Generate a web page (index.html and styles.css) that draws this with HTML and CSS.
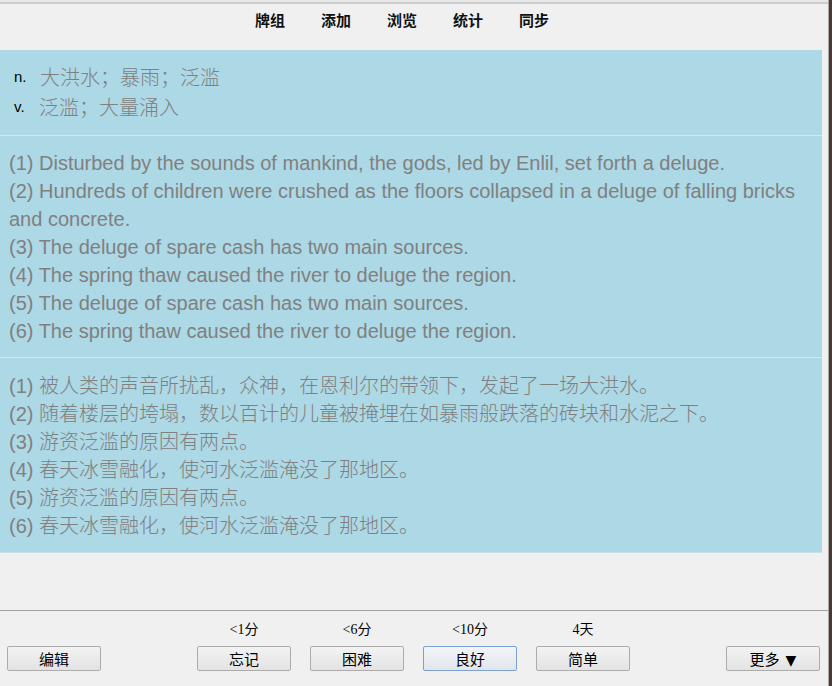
FILE: index.html
```html
<!DOCTYPE html>
<html lang="zh">
<head>
<meta charset="utf-8">
<title>deluge</title>
<link rel="stylesheet" href="styles.css">
</head>
<body>
<div class="window">
  <div class="main">
    <div class="topline"></div>
    <nav class="nav">
      <span>牌组</span>
      <span>添加</span>
      <span>浏览</span>
      <span>统计</span>
      <span>同步</span>
    </nav>
    <div class="card">
      <section class="defs">
        <div class="def"><span class="pos">n.</span><span class="zh">大洪水；暴雨；泛滥</span></div>
        <div class="def"><span class="pos">v.</span><span class="zh">泛滥；大量涌入</span></div>
      </section>
      <section class="sents">
        <div>(1) Disturbed by the sounds of mankind, the gods, led by Enlil, set forth a deluge.</div>
        <div>(2) Hundreds of children were crushed as the floors collapsed in a deluge of falling bricks and concrete.</div>
        <div>(3) The deluge of spare cash has two main sources.</div>
        <div>(4) The spring thaw caused the river to deluge the region.</div>
        <div>(5) The deluge of spare cash has two main sources.</div>
        <div>(6) The spring thaw caused the river to deluge the region.</div>
      </section>
      <section class="sents last">
        <div>(1) <span class="zh">被人类的声音所扰乱，众神，在恩利尔的带领下，发起了一场大洪水。</span></div>
        <div>(2) <span class="zh">随着楼层的垮塌，数以百计的儿童被掩埋在如暴雨般跌落的砖块和水泥之下。</span></div>
        <div>(3) <span class="zh">游资泛滥的原因有两点。</span></div>
        <div>(4) <span class="zh">春天冰雪融化，使河水泛滥淹没了那地区。</span></div>
        <div>(5) <span class="zh">游资泛滥的原因有两点。</span></div>
        <div>(6) <span class="zh">春天冰雪融化，使河水泛滥淹没了那地区。</span></div>
      </section>
    </div>
    <div class="spacer"></div>
    <footer class="bar">
      <div class="side"><button class="btn">编辑</button></div>
      <div class="answers">
        <div class="ans"><span class="due">&lt;1分</span><button class="btn">忘记</button></div>
        <div class="ans"><span class="due">&lt;6分</span><button class="btn">困难</button></div>
        <div class="ans"><span class="due">&lt;10分</span><button class="btn focus">良好</button></div>
        <div class="ans"><span class="due">4天</span><button class="btn">简单</button></div>
      </div>
      <div class="side right"><button class="btn">更多<span class="caret">▼</span></button></div>
    </footer>
  </div>
  <div class="edge"></div>
</div>
</body>
</html>
```

FILE: styles.css
```css
* { box-sizing: border-box; }
html, body {
  margin: 0;
  padding: 0;
  width: 832px;
  height: 686px;
  overflow: hidden;
  background: #f0f0f0;
  font-family: "Liberation Sans", "Noto Sans CJK SC", sans-serif;
}
.window {
  display: flex;
  height: 686px;
}
.main {
  width: 829px;
  display: flex;
  flex-direction: column;
  border-right: 1px solid #a8a8a8;
}
.edge {
  width: 3px;
  background: #4a3a36;
}
.topline {
  height: 4px;
  border-top: 2px solid #e8e8e8;
  background: #cdcdcd;
}
.nav {
  height: 46px;
  display: flex;
  align-items: flex-start;
  gap: 36px;
  padding: 5px 0 0 255px;
  font-family: "Noto Sans CJK SC", sans-serif;
  font-weight: bold;
  font-size: 15px;
  line-height: 22px;
  color: #111;
}
.card {
  width: 822px;
  background: #add8e6;
  color: #808080;
  font-size: 20px;
}
.defs {
  padding: 12px 0 13px 14px;
  border-bottom: 1px solid #d6e6ea;
}
.def {
  height: 30px;
  line-height: 30px;
  display: flex;
  align-items: center;
}
.pos {
  color: #000;
  font-size: 15px;
  width: 26px;
}
.def:nth-child(2) .pos { width: 25px; }
.zh {
  font-family: "Noto Sans CJK SC", sans-serif;
  font-size: 20px;
  font-weight: 300;
}
.sents {
  padding: 13px 9px 12px 9px;
  line-height: 28px;
  border-bottom: 1px solid #d6e6ea;
}
.sents.last {
  padding-bottom: 13px;
  border-bottom: 1px solid #c8dfe6;
}
.sents.last div { height: 28px; }
.spacer {
  height: 58px;
  border-bottom: 1px solid #a0a0a0;
}
.bar {
  display: flex;
  justify-content: space-between;
  padding: 0 8px 0 7px;
}
.side {
  padding-top: 35px;
}
.answers {
  display: flex;
  gap: 19px;
}
.ans {
  display: flex;
  flex-direction: column;
  align-items: center;
  padding-top: 10px;
}
.due {
  font-family: "Liberation Serif", "Noto Sans CJK SC", serif;
  font-size: 14px;
  line-height: 18px;
  height: 25px;
  color: #000;
}
.btn {
  width: 94px;
  height: 25px;
  padding: 0;
  font-family: "Noto Sans CJK SC", sans-serif;
  font-size: 15px;
  line-height: 23px;
  color: #000;
  background: linear-gradient(#f3f3f3, #e3e3e3);
  border: 1px solid #acacac;
  border-radius: 2px;
}
.btn.focus {
  border-color: #7aa1d0;
  background: linear-gradient(#f1f4f8, #e2e6ec);
}
.caret {
  margin-left: 6px;
  font-family: "DejaVu Sans", sans-serif;
  font-size: 14px;
}
```
